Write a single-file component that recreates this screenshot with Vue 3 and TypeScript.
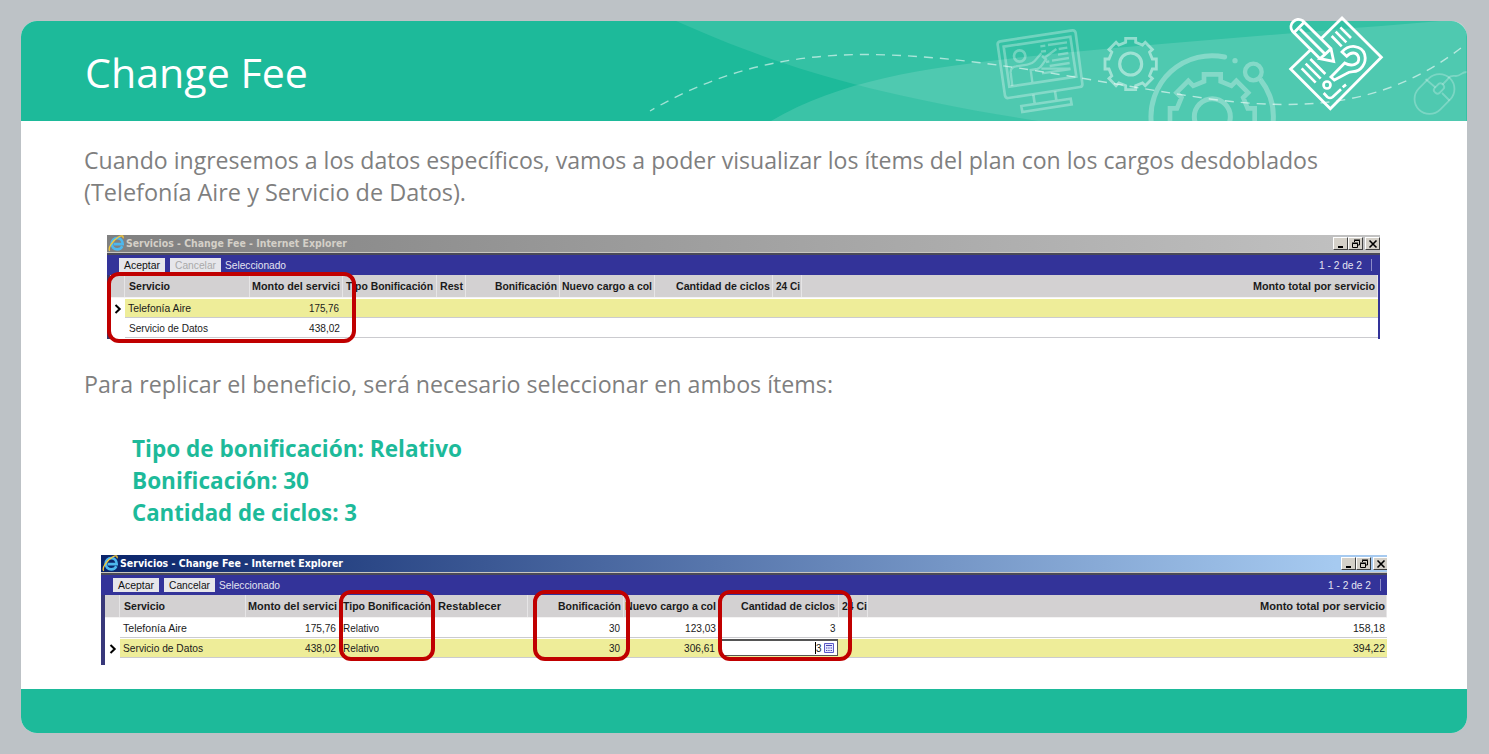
<script setup lang="ts">
import { h } from 'vue'

interface FitProps {
  s: string
  w: number
  y?: number
  hgt?: number
}

interface Cell {
  w: number
  s?: string
  x?: number
  tw?: number
  edit?: boolean
}

interface Row {
  active: boolean
  cells: Cell[]
}

interface Win {
  id: string
  disabled: boolean
  titleWidth: number
  header: Cell[]
  rows: Row[]
}

/* One line of text set to an exact measure */
const Fit = (p: FitProps) =>
  h('svg', { class: 'fit', width: p.w, height: p.hgt ?? 14 }, [
    h('text', { x: 0, y: p.y ?? 11, textLength: p.w, lengthAdjust: 'spacingAndGlyphs' }, p.s),
  ])
Fit.props = ['s', 'w', 'y', 'hgt']

function gear(cx: number, cy: number, half: number, inner: number, outer: number): string {
  const pts: string[] = []
  for (let i = 0; i < 8; i++) {
    const a = (i * Math.PI) / 4
    for (const [x, y] of [[-half, -inner], [-half, -outer], [half, -outer], [half, -inner]]) {
      pts.push(`${(cx + x * Math.cos(a) - y * Math.sin(a)).toFixed(1)},${(cy + x * Math.sin(a) + y * Math.cos(a)).toFixed(1)}`)
    }
  }
  return pts.join(' ')
}

const smallGear = gear(452, 132, 15, 65, 77)
const bigGear = gear(217, 290, 25, 106, 127)

const windows: Record<string, Win> = {
  first: {
    id: 'first',
    disabled: true,
    titleWidth: 221,
    header: [
      { w: 14 },
      { w: 125, s: 'Servicio', x: 4, tw: 41 },
      { w: 93, s: 'Monto del servici', x: 2, tw: 88 },
      { w: 94, s: 'Tipo Bonificación', x: 3, tw: 87 },
      { w: 29, s: 'Rest', x: 3, tw: 23 },
      { w: 94, s: 'Bonificación', x: 29, tw: 62 },
      { w: 95, s: 'Nuevo cargo a col', x: 2, tw: 90 },
      { w: 118, s: 'Cantidad de ciclos', x: 21, tw: 94 },
      { w: 29, s: '24 Ci', x: 3, tw: 24 },
      { w: 576, s: 'Monto total por servicio', x: 451, tw: 122 },
    ],
    rows: [
      { active: true, cells: [{ w: 125, s: 'Telefonía Aire', x: 3, tw: 63 }, { w: 93, s: '175,76', x: 59, tw: 30 }] },
      { active: false, cells: [{ w: 125, s: 'Servicio de Datos', x: 3.5, tw: 79 }, { w: 93, s: '438,02', x: 59, tw: 31 }] },
    ],
  },
  second: {
    id: 'second',
    disabled: false,
    titleWidth: 223,
    header: [
      { w: 15 },
      { w: 126, s: 'Servicio', x: 3.5, tw: 41 },
      { w: 94, s: 'Monto del servici', x: 1.5, tw: 89 },
      { w: 94, s: 'Tipo Bonificación', x: 3, tw: 88 },
      { w: 94, s: 'Restablecer', x: 4, tw: 63 },
      { w: 96, s: 'Bonificación', x: 30, tw: 63 },
      { w: 96, s: 'Nuevo cargo a col', x: 1, tw: 91 },
      { w: 119, s: 'Cantidad de ciclos', x: 21, tw: 94 },
      { w: 29, s: '24 Ci', x: 3, tw: 25 },
      { w: 519, s: 'Monto total por servicio', x: 392, tw: 125 },
    ],
    rows: [
      {
        active: false,
        cells: [
          { w: 126, s: 'Telefonía Aire', x: 2.5, tw: 64 },
          { w: 94, s: '175,76', x: 59, tw: 31 },
          { w: 94, s: 'Relativo', x: 3, tw: 36 },
          { w: 94 },
          { w: 96, s: '30', x: 81, tw: 11 },
          { w: 96, s: '123,03', x: 61, tw: 31 },
          { w: 119, s: '3', x: 110, tw: 5.5 },
          { w: 29 },
          { w: 519, s: '158,18', x: 485, tw: 32 },
        ],
      },
      {
        active: true,
        cells: [
          { w: 126, s: 'Servicio de Datos', x: 2.5, tw: 80 },
          { w: 94, s: '438,02', x: 59, tw: 31 },
          { w: 94, s: 'Relativo', x: 3, tw: 36 },
          { w: 94 },
          { w: 96, s: '30', x: 81, tw: 11 },
          { w: 96, s: '306,61', x: 60, tw: 31 },
          { w: 119, s: '3', tw: 5.5, edit: true },
          { w: 29 },
          { w: 519, s: '394,22', x: 485, tw: 32 },
        ],
      },
    ],
  },
}

const flow = [
  { kind: 'text', id: 'intro', lines: [
    { s: 'Cuando ingresemos a los datos específicos, vamos a poder visualizar los ítems del plan con los cargos desdoblados', w: 1234 },
    { s: '(Telefonía Aire y Servicio de Datos).', w: 382 },
  ] },
  { kind: 'win', id: 'first', lines: [] },
  { kind: 'text', id: 'replicate', lines: [
    { s: 'Para replicar el beneficio, será necesario seleccionar en ambos ítems:', w: 749 },
  ] },
  { kind: 'text', id: 'values', lines: [
    { s: 'Tipo de bonificación: Relativo', w: 330 },
    { s: 'Bonificación: 30', w: 177 },
    { s: 'Cantidad de ciclos: 3', w: 225 },
  ] },
  { kind: 'win', id: 'second', lines: [] },
]
</script>

<template>
  <main class="page">
    <section class="card">
      <header class="head">
        <Fit class="title" s="Change Fee" :w="223" :y="50" :hgt="70" />
      </header>

      <div class="body">
        <template v-for="b in flow" :key="b.id">
          <div v-if="b.kind === 'text'" class="para" :class="b.id">
            <Fit v-for="l in b.lines" :key="l.s" :s="l.s" :w="l.w" :y="25" :hgt="32" />
          </div>

          <div v-else class="win" :class="b.id">
            <div class="bar">
              <svg class="ie" width="17" height="17" viewBox="0 0 17 17">
                <path d="M14.300 11.200c-.9 2-2.800 3.200-5 3.200-3.300 0-5.700-2.500-5.700-5.600 0-3.200 2.500-5.700 5.700-5.700 3.300 0 5.400 2.400 5.400 6H5.500" fill="none" stroke="#4db8ee" stroke-width="2.600" />
                <path d="M1.700 15.800C-.5 13 5 5.300 10.500 2c3-1.700 5.300-1.500 4.500 1.200" fill="none" stroke="#f5c93a" stroke-width="1.300" />
              </svg>
              <Fit class="caption" s="Servicios - Change Fee - Internet Explorer" :w="windows[b.id].titleWidth" :y="12" :hgt="17" />
              <span class="btns">
                <i><svg width="14" height="12"><path d="M4 9h5" stroke="#000" stroke-width="2" /></svg></i>
                <i><svg width="14" height="12"><path d="M5.500 4V2.500h5V7H9M5 2h6M3.500 5.500h5v4h-5zM3 5h6" fill="none" stroke="#000" /></svg></i>
                <i class="x"><svg width="14" height="12"><path d="M3.500 2.500l7 7M10.500 2.500l-7 7" stroke="#000" stroke-width="1.600" /></svg></i>
              </span>
            </div>

            <div class="tools">
              <span class="btn"><Fit s="Aceptar" :w="36" /></span>
              <span class="btn" :class="{ off: windows[b.id].disabled }"><Fit s="Cancelar" :w="41" /></span>
              <Fit class="sel" s="Seleccionado" :w="61" />
              <Fit class="count" s="1 - 2 de 2" :w="43" />
              <span class="sep"></span>
            </div>

            <div class="sheet">
              <div class="row th">
                <div v-for="(c, i) in windows[b.id].header" :key="i" class="cell" :style="{ width: c.w + 'px', paddingLeft: (c.x ?? 0) + 'px' }">
                  <Fit v-if="c.s" :s="c.s" :w="c.tw ?? 0" />
                </div>
              </div>
              <div v-for="(r, i) in windows[b.id].rows" :key="i" class="row">
                <div class="gutter">
                  <svg v-if="r.active" width="8" height="10"><path d="M1.500 1L5.700 5L1.500 9" fill="none" stroke="#000" stroke-width="2" /></svg>
                </div>
                <div class="data" :class="{ active: r.active }">
                  <div v-for="(c, j) in r.cells" :key="j" class="cell" :style="{ width: c.w + 'px', paddingLeft: (c.x ?? 0) + 'px' }">
                    <div v-if="c.edit" class="edit">
                      <span class="caret"></span>
                      <Fit :s="c.s ?? ''" :w="c.tw ?? 0" />
                      <svg class="calc" width="10" height="10">
                        <path d="M.5.500h9v9h-9z" fill="#e6e8ff" stroke="#5a5ac8" />
                        <path d="M2 2.500h6M2 5h1.300M4.300 5h1.300M6.600 5H8M2 7.500h1.300M4.300 7.500h1.300M6.600 7.500H8" stroke="#4646b4" stroke-width="1.200" />
                      </svg>
                    </div>
                    <Fit v-else-if="c.s" :s="c.s" :w="c.tw ?? 0" />
                  </div>
                </div>
              </div>
            </div>
          </div>
        </template>
      </div>

      <footer class="foot"></footer>
    </section>

    <svg class="art" width="1489" height="135" viewBox="0 0 1489 135" fill="none">
      <defs>
        <clipPath id="band"><path d="M21 121V37Q21 21 37 21H1451Q1466.500 21 1466.500 37V121Z" /></clipPath>
      </defs>
      <g clip-path="url(#band)">
        <path d="M676 21C760 58 850 92 1038 121H1467V21Z" fill="#fff" fill-opacity=".1" />
        <path d="M771 121C850 74 950 65 1061 53C1180 42 1320 31 1440 21H1467V121Z" fill="#fff" fill-opacity=".135" />

        <g transform="translate(980 20) scale(.33333)" stroke="#fff" stroke-opacity=".3" stroke-width="8">
          <path d="M61 64L277 31Q285 30 287 39L307 191Q308 200 300 201L85 234Q77 235 75 227L53 74Q52 66 61 64Z" />
          <path d="M71 80L271 50L289 170L88 200Z" />
          <circle cx="119" cy="108" r="17" />
          <path d="M97 198L92 158Q91 141 108 139L142 134Q156 132 164 123L184 100M157 186L152 150L172 147Q180 145 187 134L198 118L186 108M190 116L229 87" stroke-width="7" />
          <path d="M181 79L196 77M204 75L261 67M183 95L198 93M236 87L262 83M234 104L265 99M198 126L208 124M216 122L267 114M209 138L269 129M184 146L271 146M186 160L272 147" stroke-width="7" />
          <path d="M160 224L164 250M225 214L229 240M124 258L272 236L275 253L127 276Z" />
        </g>

        <g transform="translate(980 20) scale(.33333)" stroke="#fff" stroke-opacity=".46" stroke-width="8.500">
          <polygon :points="smallGear" />
          <circle cx="452" cy="132" r="33" stroke-width="9.500" />
        </g>

        <g transform="translate(1140 20) scale(.33333)" stroke="#fff" stroke-opacity=".3" stroke-width="15">
          <polygon :points="bigGear" stroke-width="14" />
          <circle cx="217" cy="290" r="54" />
          <path d="M34 310A183 183 0 0 1 254 111" stroke-linecap="round" />
          <circle cx="285" cy="122" r="8" fill="#fff" fill-opacity=".3" stroke="none" />
          <circle cx="340" cy="156" r="25" stroke-width="13" />
          <path d="M361 178A183 183 0 0 1 399 310" />
        </g>

        <g stroke="#fff" stroke-opacity=".25" stroke-width="1.800">
          <rect x="-15" y="-22" width="30" height="44" rx="15" transform="translate(1434.500 94) rotate(45)" />
          <path d="M1425.500 79L1435.500 87.500M1442 93L1449.500 100.500M1442.500 84.500L1447 80C1450 75 1452 76 1456 76C1461 76 1461 72 1467 72" />
          <rect x="-3.500" y="-5.500" width="7" height="11" rx="3" transform="translate(1439 88.500) rotate(45)" />
        </g>

        <path d="M650 111C720 70 790 54 870 54.500C980 56 1080 80 1210 99C1310 112 1390 105 1466 44" stroke="#fff" stroke-opacity=".58" stroke-width="1.400" stroke-dasharray="9 7" stroke-dashoffset="4" />
      </g>

      <g transform="translate(1270 5) scale(.33333)" stroke="#fff" stroke-width="8.500">
        <path d="M125 131L62 192L181 311L334 157L216 39L153 101" />
        <path d="M150 161L67 78C53 59 77 33 98 47L183 131L191 169L150 161L165 148L183 131M73 82L101 53M90 72L165 147" />
        <path d="M185 93L215 124M197 80L229 112M211 67L243 99M95 190L137 233M107 176L152 221M121 162L166 207" stroke-width="8" />
        <path d="M216 141C237 116 275 120 284 148C291 176 272 199 249 200Q236 201 229 206L193 225L183 216L224 174C246 187 269 177 266 158C261 140 242 140 230 154Z" />
        <circle cx="171" cy="240" r="10.500" stroke-width="8" />
        <path d="M161 264L172 276Q180 282 188 276L213 253M218 247L228 239" stroke-width="8" />
      </g>
    </svg>

    <span class="mark m1"></span>
    <span class="mark m2"></span>
    <span class="mark m3"></span>
    <span class="mark m4"></span>
  </main>
</template>

<style>
html,
body {
  margin: 0;
  background: #bdc2c6;
}
</style>

<style scoped>
.page {
  position: relative;
  box-sizing: border-box;
  width: 1489px;
  height: 754px;
  padding: 21px 22.5px 21px 21px;
  background: #bdc2c6;
  font-family: 'Liberation Sans', sans-serif;
  overflow: hidden;
}
.card {
  display: flex;
  flex-direction: column;
  height: 712px;
  border-radius: 16px;
  overflow: hidden;
  background: #fff;
}
.head {
  height: 100px;
  flex: none;
  padding: 17px 0 0 64px;
  box-sizing: border-box;
  background: #1dba9a;
}
.foot {
  height: 44px;
  flex: none;
  background: #1dba9a;
}
.body {
  flex: 1;
  display: flex;
  flex-direction: column;
  align-items: flex-start;
  padding-top: 23px;
}
.fit,
:deep(.fit) {
  display: block;
  flex: none;
  overflow: visible;
  fill: currentColor;
}
.title {
  color: #fff;
  font-family: 'Open Sans', sans-serif;
  font-size: 39.500px;
}
.para {
  margin-left: 63px;
  color: #7f7f7f;
  font-family: 'Open Sans', sans-serif;
  font-size: 23.500px;
}
.replicate {
  margin-top: 29px;
}
.values {
  margin: 32px 0 0 111px;
  color: #1dba9a;
  font-weight: 700;
}
.win {
  margin-top: 27px;
  overflow: hidden;
  font-size: 10.500px;
  color: #1a1a1a;
}
.win.first {
  width: 1273px;
  height: 104px;
  margin-left: 86px;
}
.win.second {
  width: 1286px;
  height: 110px;
  margin-left: 80px;
}
.bar {
  display: flex;
  align-items: center;
  height: 17px;
  padding-left: 1px;
  border-bottom: 1px solid #c9c6c0;
  background: linear-gradient(90deg, #808080, #c2c2c2);
}
.second .bar {
  background: linear-gradient(90deg, #0a246a, #a6caf0 96%);
}
.caption {
  margin-left: 0.5px;
  color: #d4d0c8;
  font: 700 10.500px 'DejaVu Sans', sans-serif;
}
.second .caption {
  color: #fff;
}
.btns {
  display: flex;
  margin-left: auto;
}
.btns i {
  width: 13px;
  height: 11px;
  background: #d4d0c8;
  border: 1px solid;
  border-color: #fff #404040 #404040 #fff;
}
.btns svg {
  display: block;
}
.btns .x {
  margin-left: 2px;
}
.second .btns {
  margin-right: -1px;
}
.tools {
  display: flex;
  align-items: center;
  height: 20px;
  padding-left: 12px;
  border-top: 2px solid #4a4a58;
  background: #333399;
  color: #e4e4f2;
}
.btn {
  display: flex;
  align-items: center;
  height: 14px;
  margin-right: 5px;
  padding: 0 5px;
  background: #e6e6ea;
  color: #111;
}
.btn.off {
  color: #a9a9a9;
}
.btn + .btn {
  padding: 0 5px;
  margin-right: 4px;
}
.count {
  margin-left: auto;
}
.sep {
  width: 1px;
  height: 12px;
  margin: 0 8px 0 9px;
  background: #8c8cc8;
}
.second .sep {
  margin-right: 6px;
}
.sheet {
  height: 80px;
  background: #fff;
}
.first .sheet {
  padding-left: 1px;
  border-left: 3px solid #38386a;
  border-right: 2px solid #333399;
}
.second .sheet {
  border-left: 4px solid #38387a;
}
.row {
  display: flex;
}
.cell {
  flex: none;
  box-sizing: border-box;
  display: flex;
  align-items: center;
}
.th {
  height: 22px;
  border-bottom: 1px solid #f4f3f3;
  margin-bottom: 1px;
  background: #d3d1d2;
  font-weight: 700;
  font-size: 11px;
}
.th .cell {
  border-right: 1px solid #e6e5e6;
  padding-bottom: 1px;
}
.gutter {
  flex: none;
  width: 14px;
  display: flex;
  align-items: center;
  justify-content: center;
}
.second .gutter {
  width: 15px;
}
.data {
  flex: 1;
  display: flex;
  height: 18px;
  border-bottom: 1px solid #cbcbcf;
  margin-bottom: 1px;
}
.data.active {
  background: #eeed99;
}
.data .cell {
  padding-bottom: 1px;
}
.edit {
  box-sizing: border-box;
  width: 118px;
  height: 17px;
  display: flex;
  align-items: center;
  justify-content: flex-end;
  padding-right: 3px;
  border: 1px solid #555;
  border-width: 2px 1px 1px 1px;
  background: #fff;
}
.caret {
  width: 1px;
  height: 12px;
  background: #000;
}
.calc {
  margin-left: 3px;
}
.art {
  position: absolute;
  left: 0;
  top: 0;
}
.mark {
  position: absolute;
  box-sizing: border-box;
  border: 4px solid #c00000;
  border-radius: 12px;
}
.m1 {
  left: 107px;
  top: 272px;
  width: 249px;
  height: 71px;
}
.m2 {
  left: 339px;
  top: 590px;
  width: 96px;
  height: 71px;
}
.m3 {
  left: 533px;
  top: 590px;
  width: 97px;
  height: 71px;
}
.m4 {
  left: 718px;
  top: 590px;
  width: 134px;
  height: 71px;
}
</style>
